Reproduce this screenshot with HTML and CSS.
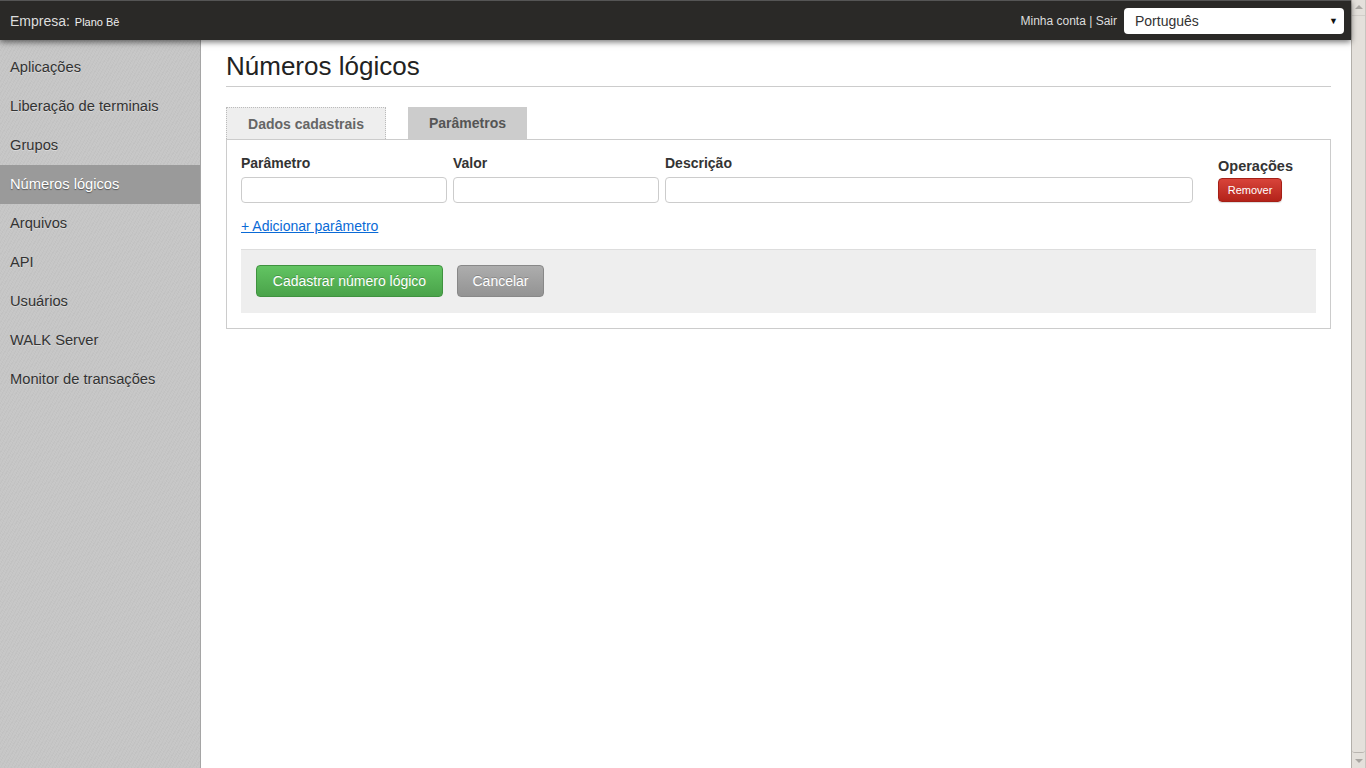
FILE: index.html
```html
<!DOCTYPE html>
<html lang="pt">
<head>
<meta charset="utf-8">
<title>Números lógicos</title>
<link rel="stylesheet" href="styles.css">
</head>
<body>
<div class="page">
  <header class="topbar">
    <div class="company">Empresa: <span class="company-name">Plano Bê</span></div>
    <div class="top-right">
      <span class="account"><a href="#">Minha conta</a> | <a href="#">Sair</a></span>
      <div class="lang-select">
        <span>Português</span>
        <span class="arrow">▼</span>
      </div>
    </div>
  </header>
  <div class="layout">
    <nav class="sidebar">
      <a class="nav-item" href="#">Aplicações</a>
      <a class="nav-item" href="#">Liberação de terminais</a>
      <a class="nav-item" href="#">Grupos</a>
      <a class="nav-item active" href="#">Números lógicos</a>
      <a class="nav-item" href="#">Arquivos</a>
      <a class="nav-item" href="#">API</a>
      <a class="nav-item" href="#">Usuários</a>
      <a class="nav-item" href="#">WALK Server</a>
      <a class="nav-item" href="#">Monitor de transações</a>
    </nav>
    <main class="content">
      <h1 class="page-title">Números lógicos</h1>
      <div class="tabs">
        <a class="tab tab-inactive" href="#">Dados cadastrais</a>
        <a class="tab tab-active" href="#">Parâmetros</a>
      </div>
      <div class="panel">
        <div class="param-row">
          <div class="field field-param">
            <label>Parâmetro</label>
            <input type="text">
          </div>
          <div class="field field-value">
            <label>Valor</label>
            <input type="text">
          </div>
          <div class="field field-desc">
            <label>Descrição</label>
            <input type="text">
          </div>
          <div class="field field-ops">
            <label class="ops-label">Operações</label>
            <button class="btn-remove" type="button">Remover</button>
          </div>
        </div>
        <a class="add-link" href="#">+ Adicionar parâmetro</a>
        <div class="form-actions">
          <button class="btn btn-success" type="button">Cadastrar número lógico</button>
          <button class="btn btn-cancel" type="button">Cancelar</button>
        </div>
      </div>
    </main>
  </div>
</div>
<div class="scrollbar">
  <div class="sb-arrow sb-up"></div>
  <div class="sb-thumb"></div>
  <div class="sb-arrow sb-down"></div>
</div>
</body>
</html>
```

FILE: styles.css
```css
* { box-sizing: border-box; }
html, body { margin: 0; padding: 0; height: 100%; }
body {
  display: flex;
  height: 768px;
  overflow: hidden;
  font-family: "Liberation Sans", Arial, sans-serif;
  color: #333;
  background: #fff;
}
.page {
  flex: 1;
  display: flex;
  flex-direction: column;
  min-width: 0;
}
.topbar {
  position: relative;
  z-index: 2;
  height: 40px;
  flex: none;
  background: #2a2927;
  border-top: 1px solid #555;
  box-shadow: 0 2px 6px rgba(0,0,0,0.55);
  display: flex;
  align-items: center;
  justify-content: space-between;
  padding: 0 7px 0 10px;
  color: #e6e6e6;
}
.company { font-size: 14px; color: #ddd; }
.company-name { font-size: 11px; color: #eee; margin-left: 1px; }
.top-right { display: flex; align-items: center; gap: 7px; }
.account { font-size: 12px; color: #ddd; }
.account a { color: #ddd; text-decoration: none; }
.lang-select {
  width: 220px;
  height: 26px;
  background: #fff;
  border-radius: 4px;
  display: flex;
  align-items: center;
  justify-content: space-between;
  padding: 0 6px 0 11px;
  font-size: 14px;
  color: #333;
}
.lang-select .arrow { font-size: 9px; color: #111; }

.layout { flex: 1; display: flex; min-height: 0; }
.sidebar {
  width: 201px;
  flex: none;
  background-color: #c6c6c6;
  background-image:
    repeating-linear-gradient(37deg, rgba(255,255,255,0.035) 0 1px, transparent 1px 2px),
    repeating-linear-gradient(-61deg, rgba(0,0,0,0.025) 0 1px, transparent 1px 3px);
  border-right: 1px solid #a5a5a5;
  padding-top: 8px;
  display: flex;
  flex-direction: column;
}
.nav-item {
  display: block;
  height: 39px;
  line-height: 39px;
  padding-left: 10px;
  font-size: 14.7px;
  color: #333;
  text-decoration: none;
  text-shadow: 0 1px 0 rgba(255,255,255,0.35);
}
.nav-item.active {
  background: #9a9a9a;
  color: #fff;
  text-shadow: 0 1px 1px rgba(0,0,0,0.45);
}

.content {
  flex: 1;
  padding: 11px 20px 0 25px;
  min-width: 0;
}
.page-title {
  margin: 0;
  font-size: 26px;
  font-weight: normal;
  line-height: 30px;
  color: #222;
  padding-bottom: 5px;
  border-bottom: 1px solid #ccc;
}
.tabs {
  display: flex;
  gap: 22px;
  margin-top: 20px;
  height: 32px;
}
.tab {
  display: flex;
  align-items: center;
  justify-content: center;
  height: 32px;
  font-size: 14px;
  font-weight: bold;
  color: #555;
  text-decoration: none;
}
.tab-inactive {
  width: 160px;
  background: #eee;
  border: 1px dotted #bbb;
  border-bottom: none;
  color: #666;
}
.tab-active {
  width: 119px;
  background: #ccc;
}
.panel {
  border: 1px solid #ccc;
  padding: 14px 14px 15px 14px;
}
.param-row { display: flex; align-items: flex-start; }
.field { display: flex; flex-direction: column; }
.field label {
  font-size: 14px;
  font-weight: bold;
  line-height: 18px;
  margin-bottom: 5px;
  color: #333;
}
.field input {
  height: 26px;
  border: 1px solid #ccc;
  border-radius: 4px;
  background: #fff;
  margin: 0;
  padding: 2px 6px;
  font: inherit;
}
.field-param { width: 206px; }
.field-value { width: 206px; margin-left: 6px; }
.field-desc { width: 528px; margin-left: 6px; }
.field-ops { margin-left: 25px; padding-top: 3px; }
.field-ops .ops-label {
  font-size: 14.5px;
  margin-bottom: 3px;
  color: #333;
}
.btn-remove {
  width: 64px;
  height: 24px;
  border: 1px solid #a51f16;
  border-radius: 4px;
  background: linear-gradient(#d8443a, #b3231a);
  color: #fff;
  font-family: inherit;
  font-size: 11px;
  padding: 0;
  box-shadow: 0 1px 1px rgba(0,0,0,0.15);
}
.add-link {
  display: inline-block;
  margin-top: 14px;
  font-size: 14px;
  line-height: 18px;
  color: #0a6ad6;
  text-decoration: underline;
}
.form-actions {
  margin-top: 14px;
  background: #eee;
  border-top: 1px solid #ddd;
  padding: 15px 15px 16px 15px;
  display: flex;
  gap: 14px;
}
.btn {
  height: 32px;
  border-radius: 4px;
  font-family: inherit;
  font-size: 14px;
  color: #fff;
  padding: 0 14px;
  text-shadow: 0 -1px 0 rgba(0,0,0,0.2);
}
.btn-success {
  width: 187px;
  background: linear-gradient(#62c462, #4aa34a);
  border: 1px solid #3f923f;
}
.btn-cancel {
  width: 87px;
  background: linear-gradient(#adadad, #939393);
  border: 1px solid #888;
}

.scrollbar {
  width: 15px;
  flex: none;
  background: #e4e0db;
  border-left: 1px solid #b3afaa;
  border-right: 1px solid #c9c5c0;
  display: flex;
  flex-direction: column;
}
.sb-arrow { height: 14px; display: flex; align-items: center; justify-content: center; }
.sb-up::before {
  content: "";
  border-left: 4px solid transparent;
  border-right: 4px solid transparent;
  border-bottom: 4px solid #a9a6a2;
}
.sb-down::before {
  content: "";
  border-left: 4px solid transparent;
  border-right: 4px solid transparent;
  border-top: 4px solid #a9a6a2;
}
.sb-thumb {
  flex: 1;
  margin: 1px 0;
  background: #e4e0db;
  border-top: 1px solid #d2cec9;
  border-bottom: 1px solid #b8b4af;
  border-radius: 0 0 3px 3px;
}
```
